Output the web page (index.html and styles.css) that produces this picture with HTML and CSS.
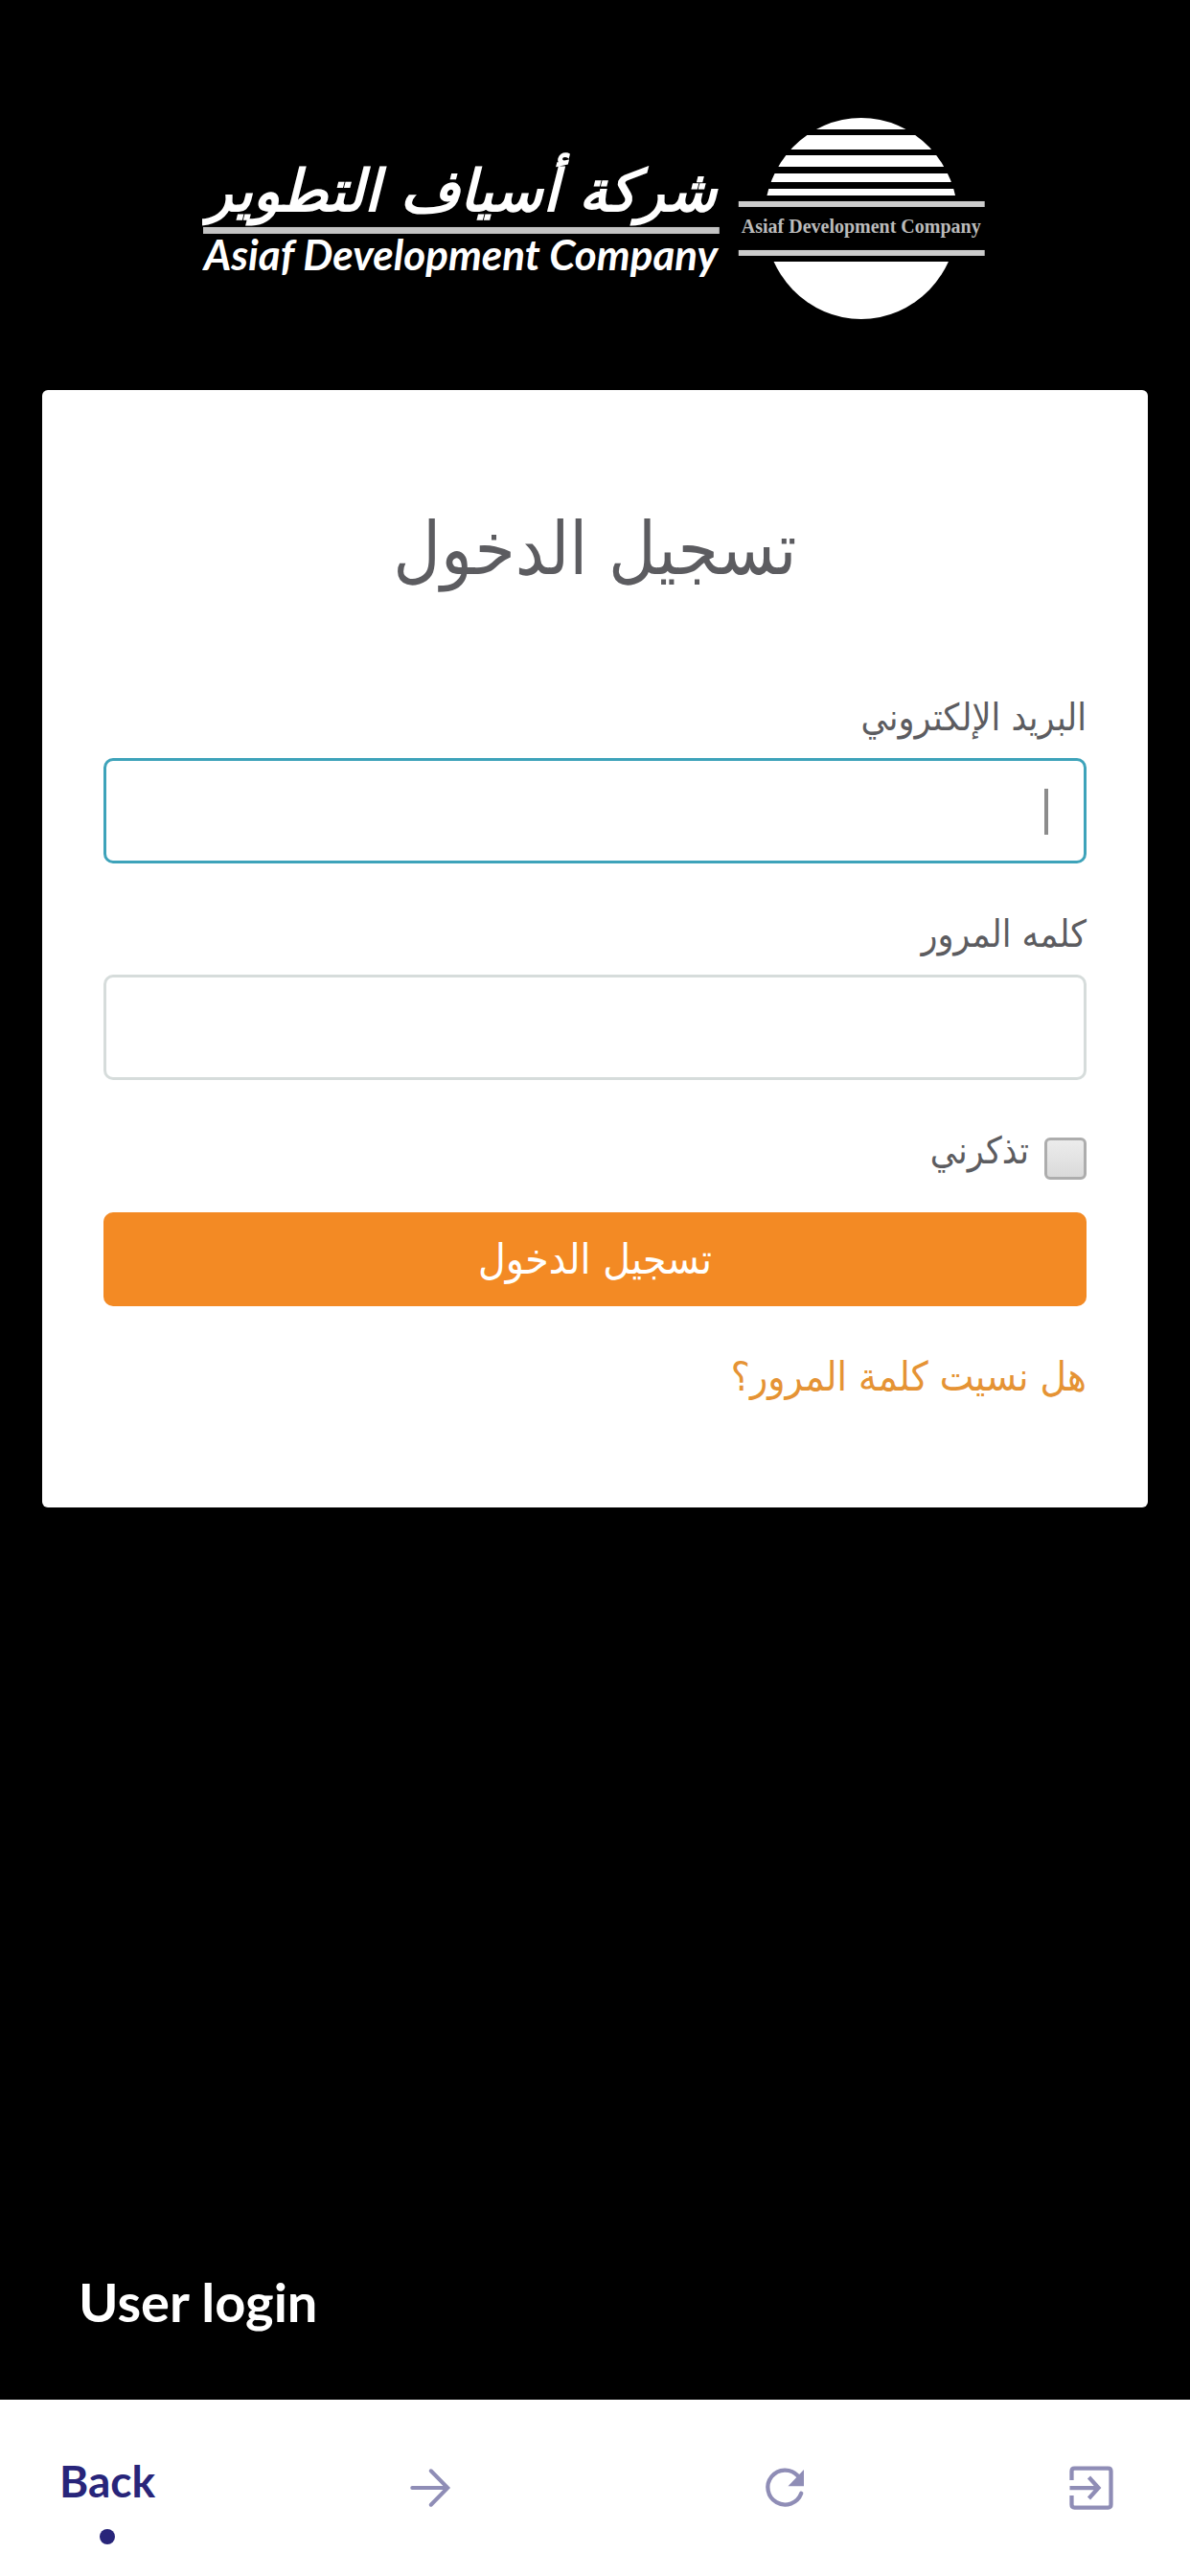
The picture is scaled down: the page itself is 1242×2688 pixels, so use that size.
FILE: index.html
```html
<!DOCTYPE html>
<html lang="ar">
<head>
<meta charset="utf-8">
<meta name="viewport" content="width=device-width, initial-scale=1">
<title>تسجيل الدخول</title>
<link rel="stylesheet" href="styles.css">
</head>
<body>
<header class="brand">
  <svg class="logo" viewBox="0 0 820 212" role="img" aria-label="Asiaf Development Company">
    <g fill="#fff">
      <text class="logo-ar" x="270" y="98" text-anchor="middle" direction="rtl">شركة أسياف التطوير</text>
      <rect x="1" y="115" width="539" height="7" fill="#c4c4c4"/>
      <text class="logo-en" x="270" y="160" text-anchor="middle">Asiaf Development Company</text>
      <clipPath id="bands">
        <path d="M560 0H820V13H560zM560 19H820V34H560zM560 40H820V52H560zM560 59H820V68H560zM560 75H820V82H560zM560 151H820V212H560z"/>
      </clipPath>
      <ellipse cx="688" cy="106" rx="101" ry="105" clip-path="url(#bands)"/>
      <rect x="560" y="88" width="257" height="6" fill="#ccc"/>
      <rect x="560" y="139" width="257" height="6" fill="#ccc"/>
      <text class="logo-small" x="688" y="121" text-anchor="middle">Asiaf Development Company</text>
    </g>
  </svg>
</header>
<main class="content">
  <form class="card" dir="rtl">
    <h1 class="title">تسجيل الدخول</h1>
    <div class="field">
      <label class="label" for="email">البريد الإلكتروني</label>
      <div class="control">
        <input class="input input-active" id="email" type="email">
        <span class="caret"></span>
      </div>
    </div>
    <div class="field">
      <label class="label" for="password">كلمه المرور</label>
      <input class="input" id="password" type="password">
    </div>
    <div class="remember">
      <input class="check" id="remember" type="checkbox">
      <label class="label" for="remember">تذكرني</label>
    </div>
    <button class="submit" type="submit">تسجيل الدخول</button>
    <a class="forgot" href="#">هل نسيت كلمة المرور؟</a>
  </form>
</main>
<p class="page-name" lang="en">User login</p>
<nav class="toolbar" lang="en">
  <button class="tool tool-back" type="button">Back</button>
  <button class="tool" type="button" aria-label="Forward">
    <svg class="icon" viewBox="0 0 24 24"><path d="M4.500 12H19M12.300 4.900L19.300 12L12.300 19.100" fill="none" stroke="currentColor" stroke-width="1.600" stroke-linecap="round"/></svg>
  </button>
  <button class="tool" type="button" aria-label="Reload">
    <svg class="icon" viewBox="0 0 24 24"><path d="M17.500 7A7.200 7.200 0 1 0 18.900 14.300" fill="none" stroke="currentColor" stroke-width="1.700" stroke-linecap="round"/><path d="M20 4.400V11.300H13.400z" fill="currentColor"/></svg>
  </button>
  <button class="tool" type="button" aria-label="Exit">
    <svg class="icon" viewBox="0 0 24 24"><path d="M3.800 8.800V5q0-1.200 1.200-1.200H19q1.200 0 1.200 1.200V19q0 1.200-1.200 1.200H5q-1.200 0-1.200-1.200V15.200M3 12H15M11 7.600L15 12L11 16.400" fill="none" stroke="currentColor" stroke-width="1.700"/></svg>
  </button>
</nav>
</body>
</html>
```
FILE: styles.css
```css
* { box-sizing: border-box; }

body {
  margin: 0;
  min-height: 100vh;
  display: flex;
  flex-direction: column;
  background: #000;
  color: #5c5c60;
  font-family: "DejaVu Sans Condensed", "DejaVu Sans", sans-serif;
}

.brand {
  display: flex;
  justify-content: center;
  padding: 122px 0 73px;
}

.logo { width: 66%; display: block; }
.logo-ar { font: italic bold 60px "DejaVu Sans", sans-serif; }
.logo-en { font: italic bold 44px Lato, sans-serif; }
.logo-small { font: bold 20px "Liberation Serif", serif; fill: #bbb; }

.content { flex: 1; padding: 0 44px; }

.card {
  display: flex;
  flex-direction: column;
  padding: 116px 64px 106px;
  border-radius: 6px;
  background: #fff;
}

.title {
  margin: 0 0 92px;
  font-size: 76px;
  line-height: 100px;
  font-weight: 400;
  text-align: center;
}

.field {
  display: flex;
  flex-direction: column;
  gap: 8px;
  margin-bottom: 40px;
}

.label { font-size: 39px; line-height: 68px; }
.control { position: relative; display: flex; }

.input {
  width: 100%;
  height: 110px;
  padding: 0 38px;
  border: 3px solid #d6dcdb;
  border-radius: 10px;
  background: #fff;
  font: inherit;
  font-size: 39px;
}

.input-active { border-color: #3ea3ba; }

.caret {
  position: absolute;
  right: 40px;
  top: 32px;
  width: 4px;
  height: 48px;
  background: #8c8c8c;
}

.remember {
  display: flex;
  align-items: center;
  gap: 16px;
  margin-bottom: 30px;
}

.check {
  appearance: none;
  width: 44px;
  height: 44px;
  margin: 16px 0 0;
  border: 3px solid #adadad;
  border-radius: 6px;
  background: linear-gradient(#ececec, #dadada);
}

.submit {
  height: 98px;
  padding: 0;
  border: 0;
  border-radius: 10px;
  background: #f38a24;
  color: #fff;
  font: inherit;
  font-size: 44px;
}

.forgot {
  align-self: flex-start;
  margin-top: 44px;
  color: #e59334;
  font-size: 42px;
  line-height: 60px;
  text-decoration: none;
}

.page-name {
  margin: 0;
  padding: 0 82px 66px;
  color: #fff;
  font: 700 56px/72px Lato, sans-serif;
}

.toolbar {
  display: grid;
  grid-template-columns: 357fr 370fr 320fr 60px;
  justify-items: start;
  align-items: center;
  padding: 0 73px 0 62px;
  height: 184px;
  background: #fff;
  color: #8f8db6;
}

.tool {
  display: flex;
  padding: 0;
  border: 0;
  background: none;
  color: inherit;
}

.tool-back {
  flex-direction: column;
  align-items: center;
  gap: 20px;
  padding-top: 22px;
  color: #28257a;
  font: 700 46px/60px Lato, sans-serif;
}

.tool-back::after {
  content: "";
  width: 16px;
  height: 16px;
  border-radius: 50%;
  background: #28257a;
}

.icon { width: 60px; height: 60px; }
```
